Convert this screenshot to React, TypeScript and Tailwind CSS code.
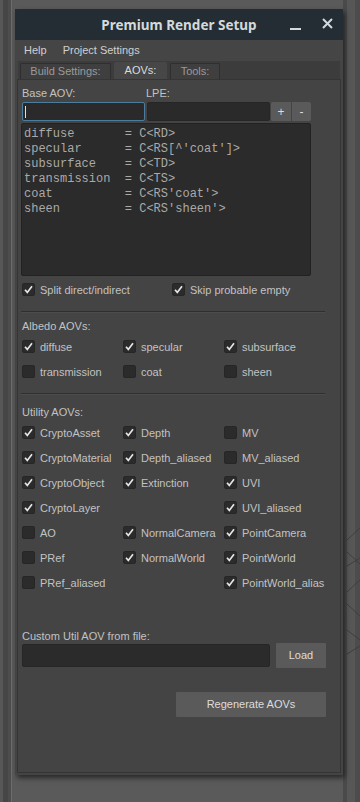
import React from "react";

const lpeRows: [string, string][] = [
  ["diffuse", "C<RD>"],
  ["specular", "C<RS[^'coat']>"],
  ["subsurface", "C<TD>"],
  ["transmission", "C<TS>"],
  ["coat", "C<RS'coat'>"],
  ["sheen", "C<RS'sheen'>"],
];

type Item = { label: string; on: boolean } | null;

const albedo: Item[][] = [
  [
    { label: "diffuse", on: true },
    { label: "specular", on: true },
    { label: "subsurface", on: true },
  ],
  [
    { label: "transmission", on: false },
    { label: "coat", on: false },
    { label: "sheen", on: false },
  ],
];

const utility: Item[][] = [
  [
    { label: "CryptoAsset", on: true },
    { label: "Depth", on: true },
    { label: "MV", on: false },
  ],
  [
    { label: "CryptoMaterial", on: true },
    { label: "Depth_aliased", on: true },
    { label: "MV_aliased", on: false },
  ],
  [
    { label: "CryptoObject", on: true },
    { label: "Extinction", on: true },
    { label: "UVI", on: true },
  ],
  [{ label: "CryptoLayer", on: true }, null, { label: "UVI_aliased", on: true }],
  [
    { label: "AO", on: false },
    { label: "NormalCamera", on: true },
    { label: "PointCamera", on: true },
  ],
  [
    { label: "PRef", on: false },
    { label: "NormalWorld", on: true },
    { label: "PointWorld", on: true },
  ],
  [{ label: "PRef_aliased", on: false }, null, { label: "PointWorld_alias", on: true }],
];

function Check({ label, on }: { label: string; on: boolean }) {
  return (
    <div className="flex items-center h-[13px] whitespace-nowrap">
      <div className="w-[13px] h-[13px] shrink-0 rounded-[2px] bg-[#2b2b2b] border border-[#262626] flex items-center justify-center">
        {on && (
          <svg width="11" height="11" viewBox="0 0 11 11">
            <path d="M2 5.8 L4.3 8.4 L9 2.3" fill="none" stroke="#e6e6e6" strokeWidth="1.7" />
          </svg>
        )}
      </div>
      <span className="ml-[5px] text-[11px] leading-[14px] text-[#c2c2c2]">{label}</span>
    </div>
  );
}

function Grid({ rows }: { rows: Item[][] }) {
  return (
    <div className="flex flex-col gap-[12px] ml-[4px]">
      {rows.map((r, i) => (
        <div key={i} className="flex">
          {r.map((it, j) => (
            <div key={j} className="w-[101px]">
              {it && <Check label={it.label} on={it.on} />}
            </div>
          ))}
        </div>
      ))}
    </div>
  );
}

function Separator() {
  return <div className="ml-[3px] w-[304px] h-[2px] border-t border-[#2f2f2f] border-b border-b-[#4c4c4c]" />;
}

export default function App() {
  return (
    <div className="w-[360px] h-[802px] bg-[#5a5a5a] flex overflow-hidden font-['Liberation_Sans',Arial,sans-serif]">
      <div className="w-[3px] bg-[#575757]" />
      <div className="w-[5px] bg-[#464646]" />
      <div className="w-[3px] bg-[#4d4d4d]" />
      <div className="w-[1px] bg-[#6c6c6c]" />

      <div className="ml-[3px] mt-[9px] w-[328px] h-[766px] shrink-0 flex flex-col bg-[#444444] shadow-[2px_3px_5px_rgba(0,0,0,0.55)] relative z-10">
        {/* title bar */}
        <div className="h-[31px] bg-[#232d33] flex items-center relative">
          <div className="flex-1 text-center font-['Noto_Sans',sans-serif] font-bold text-[13.5px] text-[#d3d9dc] pt-[1px]">
            Premium Render Setup
          </div>
          <div className="absolute left-[275px] top-[19px] w-[11px] h-[2px] bg-[#d3d9dc]" />
          <svg className="absolute left-[307px] top-[9px]" width="11" height="11" viewBox="0 0 11 11">
            <path d="M1 1 L10 10 M10 1 L1 10" stroke="#d3d9dc" strokeWidth="2" />
          </svg>
        </div>

        {/* menu */}
        <div className="h-[21px] flex items-center text-[11px] text-[#cfcfcf] bg-[#454545]">
          <span className="ml-[9px]">Help</span>
          <span className="ml-[16px]">Project Settings</span>
        </div>

        {/* tabs */}
        <div className="mx-[3px] h-[18px] bg-[#3c3c3c] flex items-end pl-[2px] gap-[3px] text-[11px]">
          <div className="w-[91px] h-[16px] bg-[#3f3f3f] border border-b-0 border-[#2f2f2f] rounded-t-[2px] flex items-center justify-center text-[#9a9a9a]">
            Build Settings:
          </div>
          <div className="w-[53px] h-[17px] bg-[#474747] rounded-t-[2px] flex items-center justify-center text-[#dcdcdc]">
            AOVs:
          </div>
          <div className="w-[50px] h-[16px] bg-[#3f3f3f] border border-b-0 border-[#2f2f2f] rounded-t-[2px] flex items-center justify-center text-[#9a9a9a]">
            Tools:
          </div>
        </div>

        {/* panel */}
        <div className="mx-[2px] h-[694px] border border-[#353535] bg-[#444444] flex flex-col">
          <div className="mt-[6px] h-[14px] flex text-[11px] leading-[14px] text-[#c2c2c2]">
            <span className="ml-[4px] w-[124px]">Base AOV:</span>
            <span>LPE:</span>
          </div>

          <div className="mt-[2px] h-[19px] flex ml-[4px]">
            <div className="w-[123px] h-[19px] bg-[#2a2a2a] border border-[#4d7d9c] rounded-[2px] flex items-center pl-[2px]">
              <div className="w-[1px] h-[12px] bg-[#dddddd]" />
            </div>
            <div className="ml-[2px] w-[123px] h-[19px] bg-[#2a2a2a] border border-[#262626] rounded-[2px]" />
            <div className="ml-[1px] w-[20px] h-[19px] bg-[#5a5a5a] flex items-center justify-center text-[12px] text-[#dddddd] rounded-l-[2px]">
              +
            </div>
            <div className="ml-[1px] w-[19px] h-[19px] bg-[#5a5a5a] flex items-center justify-center text-[12px] text-[#dddddd] rounded-r-[2px]">
              -
            </div>
          </div>

          <div className="mt-[2px] ml-[3px] w-[290px] h-[153px] bg-[#2b2b2b] border border-[#222222] rounded-[2px] pt-[3px] pl-[2px] font-['Liberation_Mono',monospace] text-[12px] leading-[15px] text-[#a9a9a9] whitespace-pre">
            {lpeRows.map(([k, v]) => (
              <div key={k}>{k.padEnd(13, " ") + " = " + v}</div>
            ))}
          </div>

          <div className="mt-[7px] ml-[4px] flex">
            <div className="w-[150px]">
              <Check label="Split direct/indirect" on />
            </div>
            <Check label="Skip probable empty" on />
          </div>

          <div className="mt-[15px]">
            <Separator />
          </div>

          <div className="mt-[6px] ml-[4px] h-[14px] text-[11px] leading-[14px] text-[#c2c2c2]">Albedo AOVs:</div>
          <div className="mt-[7px]">
            <Grid rows={albedo} />
          </div>

          <div className="mt-[15px]">
            <Separator />
          </div>

          <div className="mt-[10px] ml-[4px] h-[14px] text-[11px] leading-[14px] text-[#c2c2c2]">Utility AOVs:</div>
          <div className="mt-[7px]">
            <Grid rows={utility} />
          </div>

          <div className="mt-[40px] ml-[4px] h-[14px] text-[11px] leading-[14px] text-[#c2c2c2]">
            Custom Util AOV from file:
          </div>
          <div className="ml-[4px] flex items-center">
            <div className="w-[248px] h-[23px] bg-[#2b2b2b] border border-[#262626] rounded-[2px]" />
            <div className="ml-[6px] w-[50px] h-[25px] bg-[#5a5a5a] rounded-[1px] flex items-center justify-center text-[11px] text-[#dddddd]">
              Load
            </div>
          </div>

          <div className="mt-[24px] ml-[158px] w-[150px] h-[25px] bg-[#5a5a5a] rounded-[1px] flex items-center justify-center text-[11px] text-[#dddddd]">
            Regenerate AOVs
          </div>
        </div>
      </div>

      {/* right viewport strip */}
      <div className="flex-1 flex">
        <div className="w-[4px] bg-[#4a4a4a]" />
        <div className="w-[8px] bg-[#575757] relative">
          <svg className="absolute left-0 top-[520px]" width="13" height="160" viewBox="0 0 13 160">
            <path d="M0 20 L13 8 M0 32 L13 44 M0 46 L13 38 M0 72 L13 60 M0 84 L13 96 M0 110 L13 120 M0 134 L13 126" stroke="#3f3f3f" strokeWidth="1" fill="none" />
          </svg>
        </div>
        <div className="flex-1 bg-[#4c4c4c]" />
      </div>
    </div>
  );
}
